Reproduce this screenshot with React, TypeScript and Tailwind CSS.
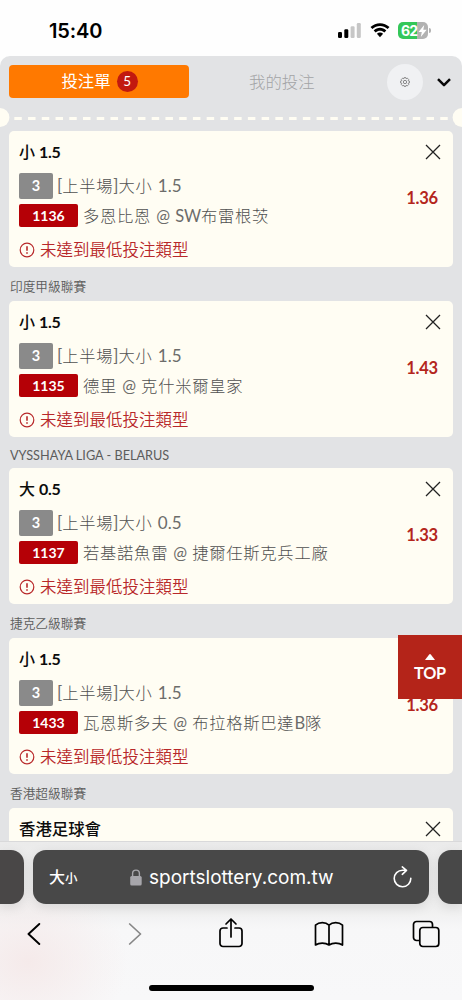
import React from "react";

type Bet = {
  league?: string;
  leagueClass?: string;
  pick: string;
  market: string;
  code: string;
  teams: string;
  odds: string;
};

const bets: Bet[] = [
  { pick: "小 1.5", market: "[上半場]大小 1.5", code: "1136", teams: "多恩比恩 @ SW布雷根茨", odds: "1.36" },
  { league: "印度甲級聯賽", leagueClass: "h-[34px] pt-[9px] font-[350]", pick: "小 1.5", market: "[上半場]大小 1.5", code: "1135", teams: "德里 @ 克什米爾皇家", odds: "1.43" },
  { league: "VYSSHAYA LIGA - BELARUS", leagueClass: "h-[31px] pt-[8px] font-normal", pick: "大 0.5", market: "[上半場]大小 0.5", code: "1137", teams: "若基諾魚雷 @ 捷爾任斯克兵工廠", odds: "1.33" },
  { league: "捷克乙級聯賽", leagueClass: "h-[34px] pt-[9px] font-[350]", pick: "小 1.5", market: "[上半場]大小 1.5", code: "1433", teams: "瓦恩斯多夫 @ 布拉格斯巴達B隊", odds: "1.36" },
];

function MixedText({ text, latinClass }: { text: string; latinClass: string }) {
  return (
    <>
      {text.split(/([A-Za-z0-9.@[\]]+)/).map((part, i) =>
        i % 2 === 1 ? (
          <span key={i} className={latinClass}>{part}</span>
        ) : (
          part
        )
      )}
    </>
  );
}

function CloseIcon() {
  return (
    <svg width="16" height="16" viewBox="0 0 16 16" fill="none" stroke="#222" strokeWidth="1.3">
      <path d="M1 1l14 14M15 1L1 15" />
    </svg>
  );
}

function WarningIcon() {
  return (
    <svg width="16" height="16" viewBox="0 0 16 16" fill="none" stroke="#b8282a" strokeWidth="1.2">
      <circle cx="8" cy="8" r="6.8" />
      <path d="M8 4.2v4.6M8 10.2v1.6" strokeWidth="1.6" />
    </svg>
  );
}

function League({ name, className }: { name: string; className: string }) {
  return (
    <div className={`whitespace-nowrap pl-px text-[12.7px] leading-5 text-[#5c5c5c] ${className}`}>{name}</div>
  );
}

function BetCard({ bet }: { bet: Bet }) {
  return (
    <div className="flex h-[136px] rounded-[5px] bg-[#fffdf3] pr-[12px] pl-[10px]">
      <div className="flex flex-1 flex-col whitespace-nowrap">
        <div className="mt-[9px] h-6 text-[16px] leading-6 font-medium text-[#0c0c0c]">
          <MixedText text={bet.pick} latinClass="font-bold tracking-[-0.3px]" />
        </div>
        <div className="mt-[9px] flex h-[26px] items-center">
          <span className="flex h-[26px] w-[34px] items-center justify-center rounded-[2px] bg-[#8a8a8a] text-[14.5px] font-bold text-white">3</span>
          <span className="ml-[4px] text-[16.3px] leading-6 font-light tracking-[0.7px] text-[#505050]">
            <MixedText text={bet.market} latinClass="text-[17px] font-normal tracking-[0.1px] text-[#6c6c6a]" />
          </span>
        </div>
        <div className="mt-[5px] flex h-[23px] items-center">
          <span className="flex h-[23px] w-[59px] items-center justify-center rounded-[2px] bg-[#b50006] text-[14px] font-bold text-white">{bet.code}</span>
          <span className="ml-[5px] text-[16.3px] leading-6 font-light tracking-[0.75px] text-[#505050]">
            <MixedText text={bet.teams} latinClass="text-[16.5px] font-normal tracking-[-0.1px] text-[#6c6c6a]" />
          </span>
        </div>
        <div className="mt-[11px] flex h-6 items-center gap-[5px] text-[16.5px] leading-6 font-[350] text-[#b8282a]">
          <WarningIcon />
          <span>未達到最低投注類型</span>
        </div>
      </div>
      <div className="flex flex-col items-end pt-[13px]">
        <CloseIcon />
        <div className="mt-[26px] mr-[3px] text-[16.5px] leading-6 font-bold tracking-[-0.2px] text-[#b4251c]">{bet.odds}</div>
      </div>
    </div>
  );
}

function StatusBar() {
  return (
    <div className="flex h-14 items-start bg-[#fefefe] pt-[18px] pl-[49px]">
      <div className="w-[289px] font-['Inter'] text-[20px] leading-[26px] font-semibold tracking-[-0.1px] text-black">15:40</div>
      <svg className="mt-[5px]" width="23" height="15" viewBox="0 0 23 15">
        <rect x="0" y="9" width="4" height="6" rx="1.2" />
        <rect x="6.3" y="6.3" width="4" height="8.7" rx="1.2" />
        <rect x="12.6" y="3.3" width="4" height="11.7" rx="1.2" fill="#c6c6c6" />
        <rect x="18.8" y="0" width="4" height="15" rx="1.2" fill="#c6c6c6" />
      </svg>
      <svg className="mt-[5px] ml-[9px]" width="20" height="15" viewBox="0 0 20 15">
        <path d="M0.5 4.1C5.8-1.1 14.2-1.1 19.5 4.1L17.6 6.1C13.3 1.9 6.7 1.9 2.4 6.1Z" />
        <path d="M3.7 7.4c3.5-3.4 9.1-3.4 12.6 0l-2 2.1c-2.4-2.3-6.2-2.3-8.6 0Z" />
        <path d="M6.9 10.8c1.8-1.6 4.4-1.6 6.2 0L10 14.2Z" />
      </svg>
      <div className="mt-[4px] ml-[8px] flex items-center">
        <div className="flex h-[17px] w-[30px] items-center rounded-[5px] bg-[linear-gradient(90deg,#34c759_62%,#b2b2b2_62%)] pl-[3px] font-['Inter'] text-[14px] font-bold tracking-[-0.8px] text-white">
          62
          <svg className="ml-px" width="9" height="12" viewBox="0 0 9 12" fill="white"><path d="M6.2 0L0.5 7H3.8L2.8 12L8.7 4.8H5.3Z" /></svg>
        </div>
        <span className="ml-px h-[5px] w-[2px] rounded-r-full bg-[#b2b2b2]" />
      </div>
    </div>
  );
}

function Header() {
  return (
    <div className="relative h-[75px]">
      <div className="flex items-center pt-[8px] pl-[9px] text-[16.4px]">
        <div className="mb-px flex h-[33px] w-[180px] items-center justify-center rounded-[4px] bg-[#ff7900] pl-px text-white">
          投注單
          <span className="ml-[6px] flex size-[21px] items-center justify-center rounded-full bg-[#c2190f] text-[13.5px]">5</span>
        </div>
        <div className="ml-[60px] w-[138px] leading-6 font-light text-[#a2a4a5]">我的投注</div>
        <div className="flex size-9 items-center justify-center rounded-full bg-[#f0f1f3]">
          <svg width="10" height="10" viewBox="0 0 20 20" fill="none" stroke="#777" strokeWidth="1.7">
            <circle cx="10" cy="10" r="3.3" />
            <path d="M8.3 1.2h3.4l.6 2.3 2.4-1.2 2.7 2.7-1.2 2.4 2.6.7v3.8l-2.6.7 1.2 2.4-2.7 2.7-2.4-1.2-.6 2.3H8.3l-.6-2.3-2.4 1.2L2.6 15l1.2-2.4-2.6-.7V8.1l2.6-.7L2.6 5l2.7-2.7 2.4 1.2Z" strokeLinejoin="round" />
          </svg>
        </div>
        <svg className="ml-[14px]" width="14" height="9" viewBox="0 0 14 9" fill="none" stroke="#080808" strokeWidth="2.5">
          <path d="M1 1.2L7 7.2L13 1.2" strokeLinejoin="round" />
        </svg>
      </div>
      <svg className="absolute top-[52px] left-0" width="462" height="20" viewBox="0 0 462 20">
        <path d="M14.3 10.5H448" stroke="#fffdf3" strokeWidth="2.8" strokeDasharray="7.5 6.24" />
        <circle cx="0" cy="9.5" r="9.4" fill="#fffdf3" />
        <circle cx="462" cy="9.5" r="9.4" fill="#fffdf3" />
      </svg>
    </div>
  );
}

function BrowserBar() {
  return (
    <div className="h-[159px] border-t border-[#d9d9da] bg-[radial-gradient(ellipse_100px_80px_at_28px_120px,#f5eaea,transparent),linear-gradient(180deg,#ebebeb,#efefef_42%,#f7f7f8_55%,#f8f8f9)] pt-[8px]">
      <div className="flex h-[54px] justify-between">
        <div className="w-[24px] rounded-r-[13px] bg-[#494747] shadow-[0_3px_12px_rgba(0,0,0,0.1)]" />
        <div className="flex w-[396px] items-center rounded-[13px] bg-[#484848] pl-[16px] text-white shadow-[0_3px_12px_rgba(0,0,0,0.1)]">
          <div className="w-[81px] pt-[2px] text-[16px] leading-6 font-medium">大<span className="text-[12.5px]">小</span></div>
          <svg width="12" height="17" viewBox="0 0 12 17" fill="#a7a6ab">
            <rect x="0.2" y="7" width="11.5" height="9.5" rx="1.5" />
            <path d="M2.6 8V4.5a3.4 3.4 0 016.8 0V8" fill="none" stroke="#a7a6ab" strokeWidth="1.4" />
          </svg>
          <div className="ml-[7px] w-[244px] pt-[2px] font-['Inter'] text-[19px] leading-6 tracking-[0px]">sportslottery.com.tw</div>
          <svg width="19" height="22" viewBox="0 0 19 22" fill="none" stroke="white" strokeWidth="1.6" strokeLinecap="round" strokeLinejoin="round">
            <path d="M17.8 12.3A8.3 8.3 0 119.5 4.2H13.3M9.3 0.9L13.5 4.3L9.3 8.3" />
          </svg>
        </div>
        <div className="w-[24px] rounded-l-[13px] bg-[#484848] shadow-[0_3px_12px_rgba(0,0,0,0.1)]" />
      </div>
      <div className="mt-[14px] flex h-[32px] items-center pl-[27px]">
        <svg width="14" height="22" viewBox="0 0 14 22" fill="none" stroke="black" strokeWidth="1.9" strokeLinecap="round" strokeLinejoin="round"><path d="M12.3 1L1.5 11L12.3 21" /></svg>
        <svg className="ml-[87px]" width="14" height="22" viewBox="0 0 14 22" fill="none" stroke="#878787" strokeWidth="1.7" strokeLinecap="round" strokeLinejoin="round"><path d="M1.7 1L12.5 11L1.7 21" /></svg>
        <svg className="ml-[76px] -translate-y-px" width="26" height="32" viewBox="0 0 26 32" fill="none" stroke="black" strokeWidth="1.7" strokeLinecap="round" strokeLinejoin="round">
          <path d="M9 11H5a3 3 0 00-3 3v12.5a3 3 0 003 3h16a3 3 0 003-3V14a3 3 0 00-3-3h-4M13 20V2M8 7l5-5 5 5" />
        </svg>
        <svg className="ml-[70px]" width="30" height="26" viewBox="0 0 30 26" fill="none" stroke="black" strokeWidth="1.7" strokeLinejoin="round">
          <path d="M15 4.2C11.5.8 5.2.8 1.5 4.2V24c3.8-2.6 9.8-2.6 13.5 0 3.7-2.6 9.7-2.6 13.5 0V4.2C24.8.8 18.5.8 15 4.2V24" />
        </svg>
        <svg className="ml-[68px]" width="28" height="28" viewBox="0 0 28 28" fill="none" stroke="black" strokeWidth="1.7">
          <path d="M7.5 20.5H4.5a3 3 0 01-3-3V4.5a3 3 0 013-3h13a3 3 0 013 3v3" />
          <rect x="7.8" y="7.5" width="19" height="19" rx="3" />
        </svg>
      </div>
      <div className="mx-auto mt-[35px] h-[6px] w-[165px] rounded-full bg-black" />
    </div>
  );
}

export default function App() {
  return (
    <div className="relative h-[1000px] w-[462px] overflow-hidden bg-[#fefefe] font-['Lato','Noto_Sans_CJK_TC',sans-serif]">
      <StatusBar />
      <div className="h-[785px] overflow-hidden rounded-t-[10px] bg-[#e2e3e5]">
        <Header />
        <div className="pr-[9px] pl-[9px]">
          {bets.map((bet) => (
            <React.Fragment key={bet.code}>
              {bet.league && <League name={bet.league} className={bet.leagueClass ?? ""} />}
              <BetCard bet={bet} />
            </React.Fragment>
          ))}
          <League name="香港超級聯賽" className="h-[34px] pt-[9px] font-[350]" />
          <div className="flex h-[50px] justify-between rounded-t-[5px] bg-[#fffdf3] pt-[9px] pr-[12px] pl-[10px] text-[16.4px] leading-6 font-medium text-[#0c0c0c]">
            香港足球會
            <div className="pt-[4px]"><CloseIcon /></div>
          </div>
        </div>
      </div>
      <BrowserBar />
      <div className="absolute top-[635px] right-0 flex h-16 w-16 flex-col items-center bg-[#b42419] pt-[19px] text-[16.3px] leading-5 font-bold text-white">
        <svg width="10" height="6" viewBox="0 0 10 6" fill="white"><path d="M0 6L4 .7Q5-.5 6 .7L10 6Z" /></svg>
        <span className="mt-[3px] tracking-[-0.2px]">TOP</span>
      </div>
    </div>
  );
}
